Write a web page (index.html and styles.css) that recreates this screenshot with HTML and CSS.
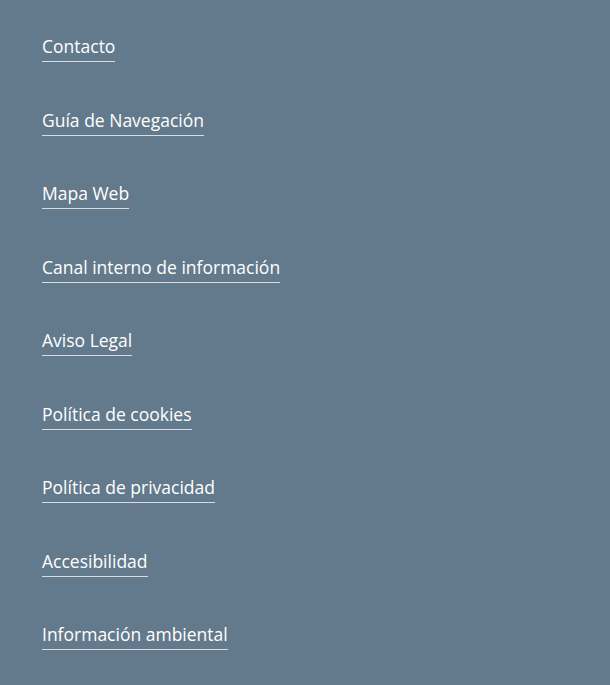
FILE: index.html
```html
<!DOCTYPE html>
<html lang="es">
<head>
    <meta charset="UTF-8">
    <meta name="viewport" content="width=device-width, initial-scale=1.0">
    <title>Enlaces</title>
    <link rel="stylesheet" href="styles.css">
</head>
<body>
    <nav class="footer-links">
        <ul>
            <li><a href="#">Contacto</a></li>
            <li><a href="#">Guía de Navegación</a></li>
            <li><a href="#">Mapa Web</a></li>
            <li><a href="#">Canal interno de información</a></li>
            <li><a href="#">Aviso Legal</a></li>
            <li><a href="#">Política de cookies</a></li>
            <li><a href="#">Política de privacidad</a></li>
            <li><a href="#">Accesibilidad</a></li>
            <li><a href="#">Información ambiental</a></li>
        </ul>
    </nav>
</body>
</html>
```

FILE: styles.css
```css
body {
    font-family: 'Open Sans', sans-serif;
    background: #637a8c;
    color: #fff;
    margin: 0;
    padding: 0;
}

.footer-links ul {
    list-style: none;
    margin: 0;
    padding: 34px 0 0 42px;
}

.footer-links li {
    height: 73.5px;
}

.footer-links a {
    display: inline-block;
    color: #fff;
    text-decoration: none;
    font-size: 17.5px;
    line-height: 24px;
    padding-bottom: 3px;
    border-bottom: 1px solid #d9dde1;
}
```
